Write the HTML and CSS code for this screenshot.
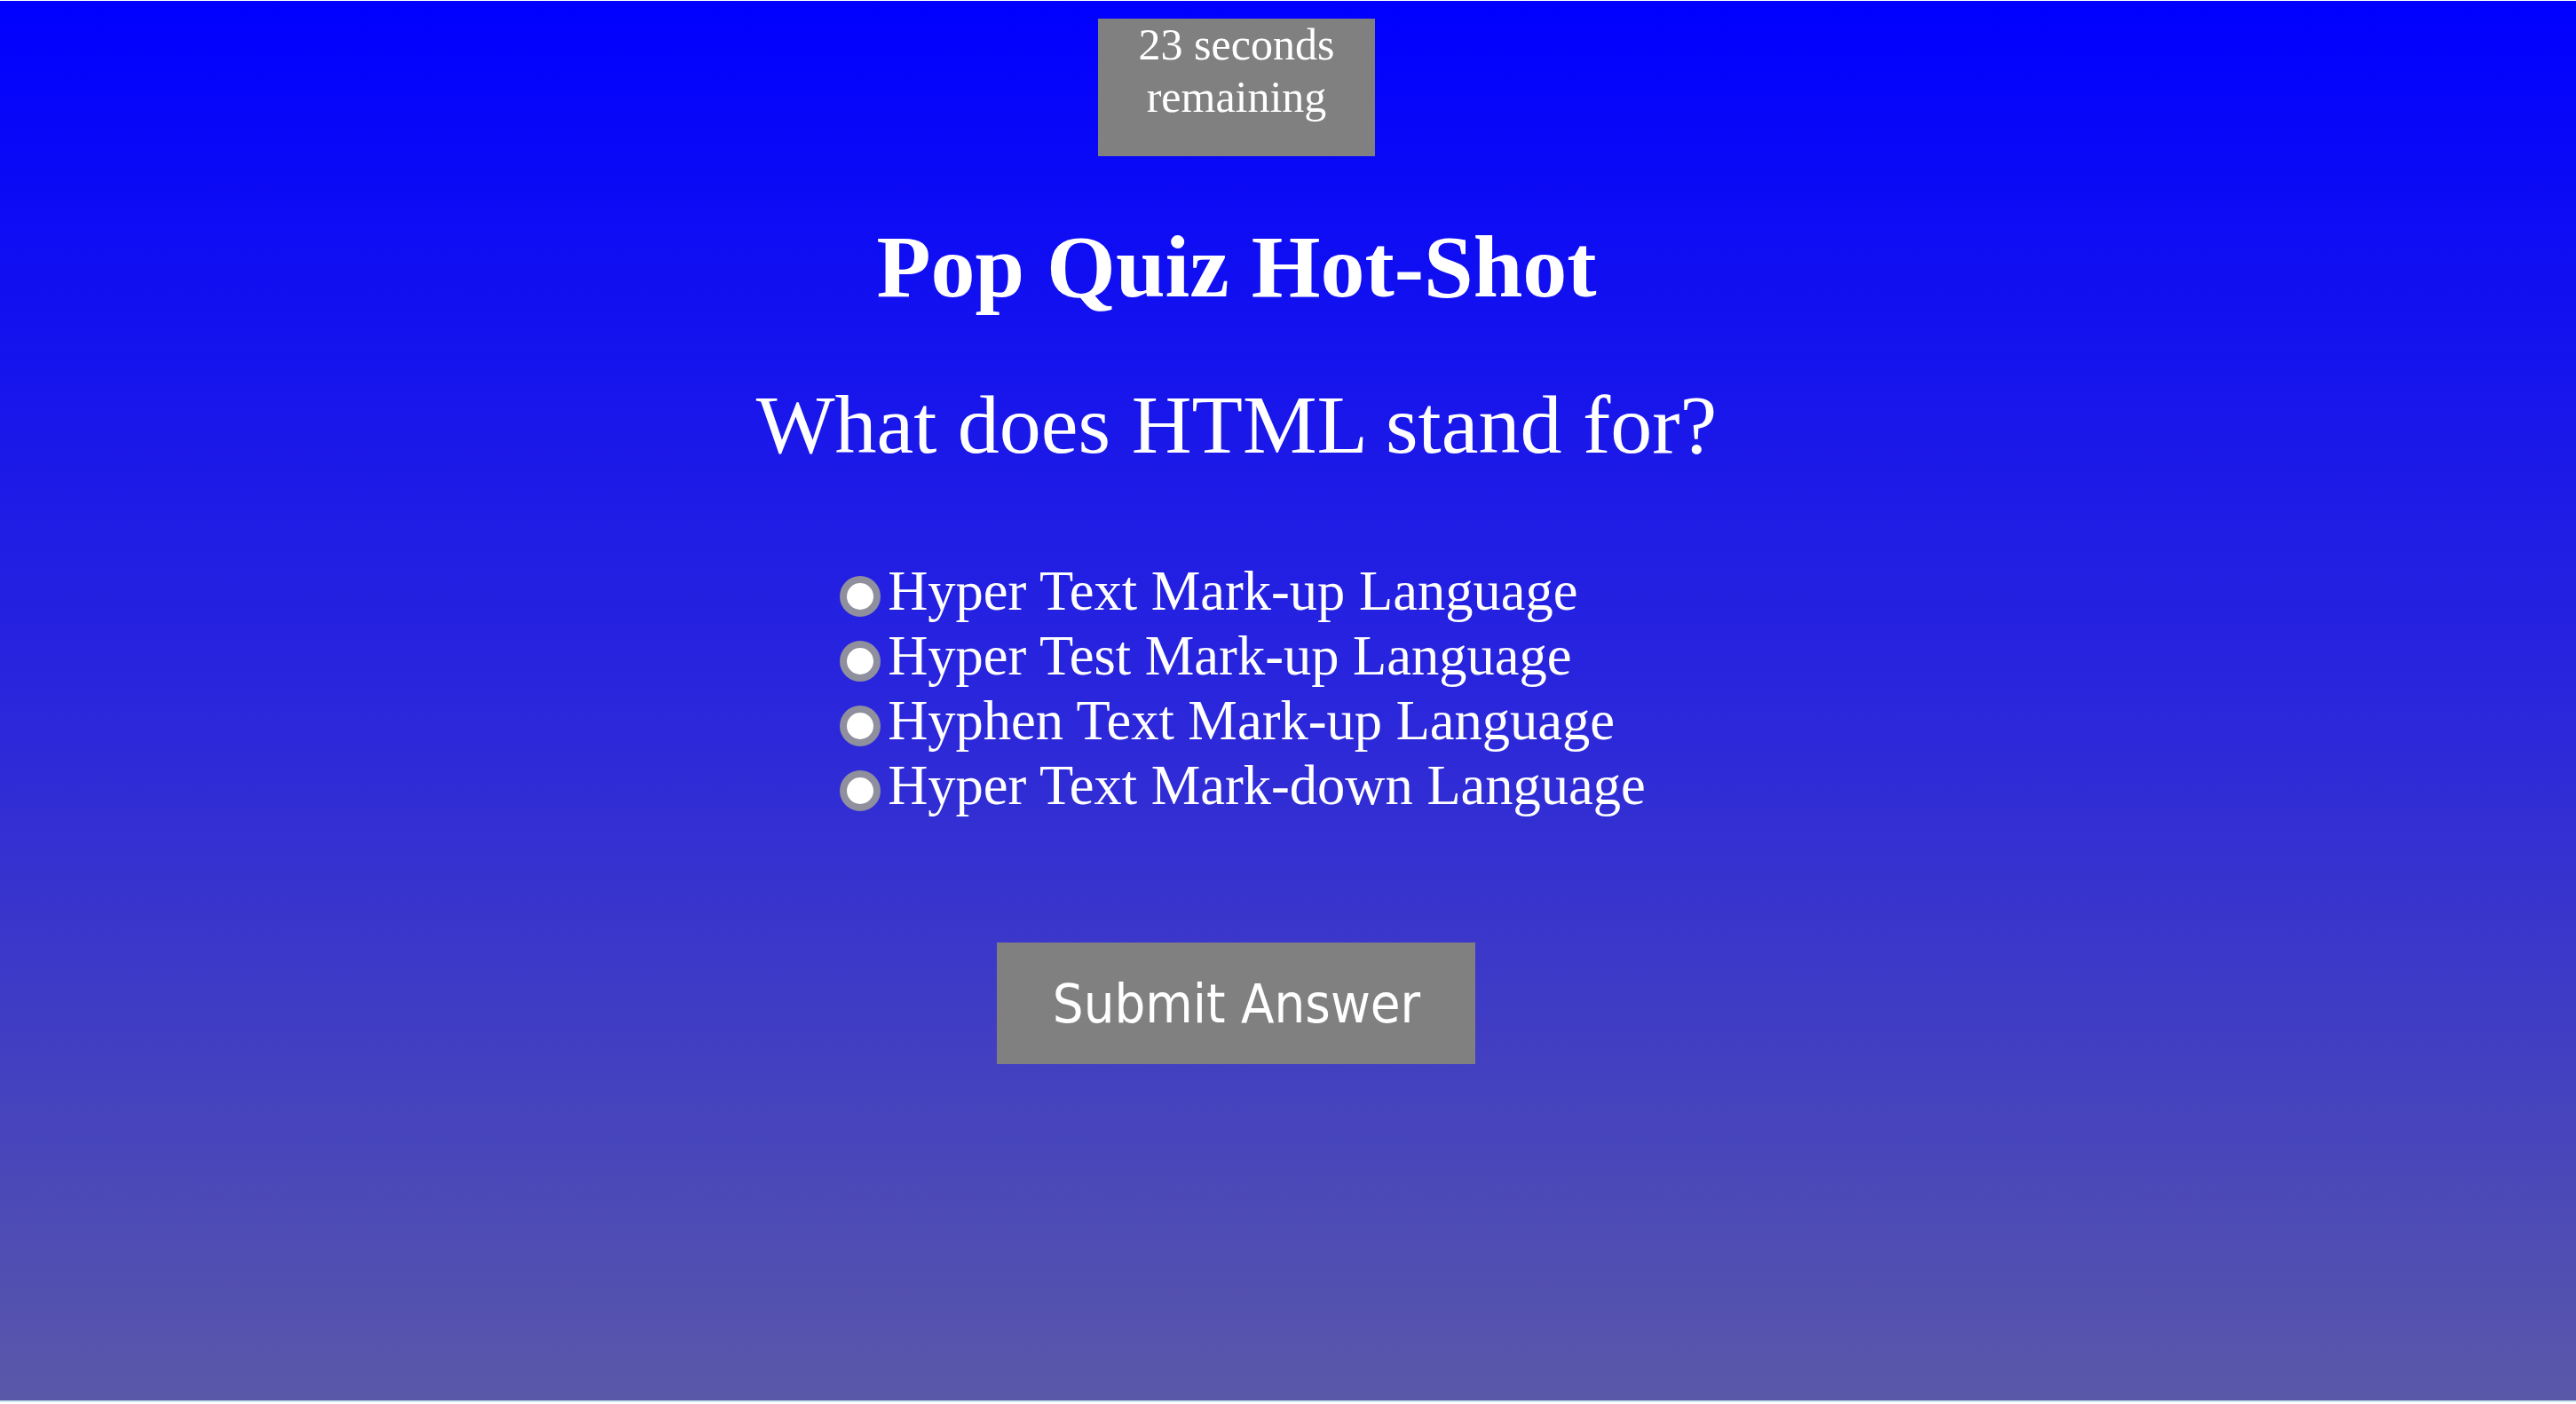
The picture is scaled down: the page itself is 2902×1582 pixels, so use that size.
FILE: index.html
```html
<!DOCTYPE html>
<html lang="en">
<head>
<meta charset="utf-8">
<title>Pop Quiz Hot-Shot</title>
<link rel="stylesheet" href="styles.css">
</head>
<body>
<main class="page">
  <div class="timer">23 seconds<br>remaining</div>
  <h1 class="title">Pop Quiz Hot-Shot</h1>
  <h2 class="question">What does HTML stand for?</h2>
  <form class="quiz">
    <div class="options">
      <label class="option"><input class="radio" type="radio" name="answer" value="a"><span>Hyper Text Mark-up Language</span></label>
      <label class="option"><input class="radio" type="radio" name="answer" value="b"><span>Hyper Test Mark-up Language</span></label>
      <label class="option"><input class="radio" type="radio" name="answer" value="c"><span>Hyphen Text Mark-up Language</span></label>
      <label class="option"><input class="radio" type="radio" name="answer" value="d"><span>Hyper Text Mark-down Language</span></label>
    </div>
    <button class="submit" type="button">Submit Answer</button>
  </form>
</main>
</body>
</html>
```

FILE: styles.css
```css
html {
  margin: 0;
  padding: 0;
  background: #ffffff;
}

body {
  margin: 0;
  padding-top: 1px;
  font-family: "Liberation Serif", "Times New Roman", serif;
  color: #ffffff;
}

.page {
  box-sizing: border-box;
  width: 2902px;
  height: 1579px;
  padding: 20px 116px 0 0;
  background: linear-gradient(to bottom, #0000ff 0%, #2a26dc 50%, #5a58a8 100%);
  border-bottom: 2px solid #cfe6ef;
  display: flex;
  flex-direction: column;
  align-items: center;
}

.timer {
  box-sizing: border-box;
  width: 312px;
  height: 155px;
  background: #808080;
  font-size: 50px;
  line-height: 59px;
  text-align: center;
  padding-top: 0;
}

.title {
  margin: 67px 0 0;
  font-size: 100px;
  line-height: 115px;
  font-weight: bold;
}

.question {
  margin: 66px 0 0;
  font-size: 94px;
  line-height: 108px;
  font-weight: normal;
}

.quiz {
  margin: 98px 0 0;
  display: flex;
  flex-direction: column;
  align-items: center;
}

.options {
  display: flex;
  flex-direction: column;
  align-items: flex-start;
  margin-left: 14px;
}

.option {
  display: flex;
  align-items: center;
  height: 73px;
  font-size: 62.5px;
  line-height: 73px;
}

.radio {
  appearance: none;
  -webkit-appearance: none;
  box-sizing: border-box;
  width: 46px;
  height: 46px;
  margin: 10px 8px 0 0;
  border: 8px solid #8f8f9d;
  border-radius: 50%;
  background: #ffffff;
  flex: none;
}

.submit {
  margin-top: 140px;
  width: 539px;
  height: 137px;
  border: none;
  background: #808080;
  color: #ffffff;
  font-family: "DejaVu Sans Condensed", "Liberation Sans", Arial, sans-serif;
  font-size: 61px;
  padding: 0;
  cursor: pointer;
}
```
